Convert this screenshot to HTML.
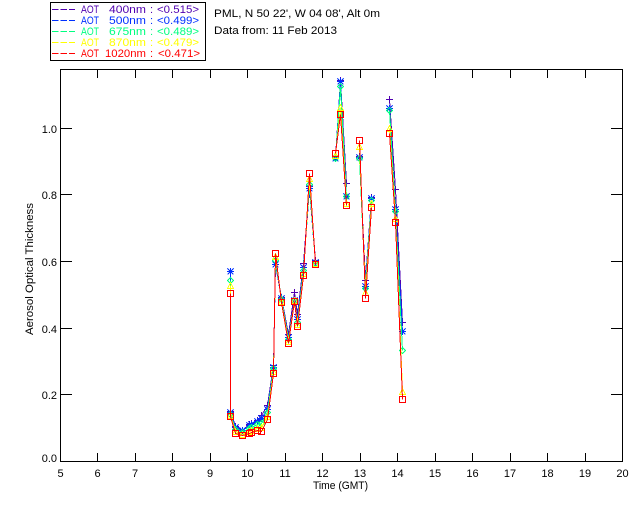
<!DOCTYPE html>
<html><head><meta charset="utf-8"><title>Aerosol Optical Thickness</title>
<style>
html,body{margin:0;padding:0;background:#fff;width:640px;height:512px;overflow:hidden}
svg{display:block}
text{font-family:"Liberation Sans",sans-serif;font-size:11px;fill:#000}
.c{text-anchor:middle}
.r{text-anchor:end}
.pu text{fill:#5000b0}
.bl text{fill:#0030ff}
.gr text{fill:#00ff80}
.ye text{fill:#ffff00}
.re text{fill:#ff0000}
</style></head><body>
<svg width="640" height="512" viewBox="0 0 640 512" xmlns="http://www.w3.org/2000/svg">
<defs>
<path id="p" d="M-3.5 0h7M0 -3.5v7"/>
<path id="b" d="M-3.5 0h7M0 -3.5v7M-3 -3l6 6M3 -3l-6 6"/>
<path id="g" d="M0 -3l3 3l-3 3l-3 -3z"/>
<path id="y" d="M0 -3l3 6h-6z"/>
<path id="s" d="M-3 -3h6v6h-6z"/>
</defs>

<!-- legend box -->
<rect x="50.5" y="2.5" width="155" height="58" fill="none" stroke="#000" shape-rendering="crispEdges"/>
<g stroke-dasharray="6.5 2" shape-rendering="crispEdges">
<path d="M52 9.5H75" stroke="#5000b0"/>
<path d="M52 20.5H75" stroke="#0030ff"/>
<path d="M52 31.5H75" stroke="#00ff80"/>
<path d="M52 42.5H75" stroke="#ffff00"/>
<path d="M52 53.5H75" stroke="#ff0000"/>
</g>
<g class="pu"><text x="81" y="13" textLength="18" lengthAdjust="spacingAndGlyphs">AOT</text><text x="109" y="13" textLength="37" lengthAdjust="spacingAndGlyphs">400nm</text><text x="150" y="13">:</text><text x="157" y="13" textLength="42" lengthAdjust="spacingAndGlyphs">&lt;0.515&gt;</text></g>
<g class="bl"><text x="81" y="24" textLength="18" lengthAdjust="spacingAndGlyphs">AOT</text><text x="109" y="24" textLength="37" lengthAdjust="spacingAndGlyphs">500nm</text><text x="150" y="24">:</text><text x="157" y="24" textLength="42" lengthAdjust="spacingAndGlyphs">&lt;0.499&gt;</text></g>
<g class="gr"><text x="81" y="35" textLength="18" lengthAdjust="spacingAndGlyphs">AOT</text><text x="109" y="35" textLength="37" lengthAdjust="spacingAndGlyphs">675nm</text><text x="150" y="35">:</text><text x="157" y="35" textLength="42" lengthAdjust="spacingAndGlyphs">&lt;0.489&gt;</text></g>
<g class="ye"><text x="81" y="46" textLength="18" lengthAdjust="spacingAndGlyphs">AOT</text><text x="109" y="46" textLength="37" lengthAdjust="spacingAndGlyphs">870nm</text><text x="150" y="46">:</text><text x="157" y="46" textLength="42" lengthAdjust="spacingAndGlyphs">&lt;0.479&gt;</text></g>
<g class="re"><text x="81" y="57" textLength="18" lengthAdjust="spacingAndGlyphs">AOT</text><text x="105" y="57" textLength="41" lengthAdjust="spacingAndGlyphs">1020nm</text><text x="150" y="57">:</text><text x="158" y="57" textLength="42" lengthAdjust="spacingAndGlyphs">&lt;0.471&gt;</text></g>

<text x="214" y="17" textLength="166" lengthAdjust="spacingAndGlyphs">PML, N 50 22', W 04 08', Alt 0m</text>
<text x="214" y="34" textLength="123" lengthAdjust="spacingAndGlyphs">Data from: 11 Feb 2013</text>

<!-- axes -->
<g fill="none" stroke="#000" shape-rendering="crispEdges">
<rect x="60.5" y="69.5" width="562" height="392"/>
<path d="M97.5 461V453M135.5 461V453M172.5 461V453M210.5 461V453M247.5 461V453M285.5 461V453M322.5 461V453M360.5 461V453M397.5 461V453M435.5 461V453M472.5 461V453M510.5 461V453M547.5 461V453M585.5 461V453"/>
<path d="M97.5 70V78M135.5 70V78M172.5 70V78M210.5 70V78M247.5 70V78M285.5 70V78M322.5 70V78M360.5 70V78M397.5 70V78M435.5 70V78M472.5 70V78M510.5 70V78M547.5 70V78M585.5 70V78"/>
<path d="M61 394.5H72M61 328.5H72M61 261.5H72M61 194.5H72M61 128.5H72"/>
<path d="M622 394.5H611M622 328.5H611M622 261.5H611M622 194.5H611M622 128.5H611"/>
</g>

<!-- tick labels -->
<g class="c">
<text x="60.5" y="477">5</text><text x="97.5" y="477">6</text><text x="135" y="477">7</text><text x="172.5" y="477">8</text><text x="210" y="477">9</text><text x="247.5" y="477">10</text><text x="285" y="477">11</text><text x="322.5" y="477">12</text><text x="360" y="477">13</text><text x="397.5" y="477">14</text><text x="435" y="477">15</text><text x="472.5" y="477">16</text><text x="510" y="477">17</text><text x="547.5" y="477">18</text><text x="585" y="477">19</text><text x="622.5" y="477">20</text>
</g>
<g class="r">
<text x="57" y="462">0.0</text><text x="57" y="399">0.2</text><text x="57" y="333">0.4</text><text x="57" y="266">0.6</text><text x="57" y="199">0.8</text><text x="57" y="133">1.0</text>
</g>
<text x="313" y="489" textLength="55" lengthAdjust="spacingAndGlyphs">Time (GMT)</text>
<text transform="translate(33 335) rotate(-90)" textLength="132" lengthAdjust="spacingAndGlyphs">Aerosol Optical Thickness</text>

<!-- data -->
<g transform="translate(-.5 .5)" fill="none" shape-rendering="crispEdges">
<g stroke="#5000b0">
<polyline points="231,271 231,411 236,426 243,430 250,424 252,423 258,420 262,415 268,405 274,365 276,264 282,297 289,334 295,292 298,314 304,263 310,186 316,260"/>
<polyline points="336,157 341,80 347,183"/>
<polyline points="360,156 366,280 372,197"/>
<polyline points="390,99 396,189 403,322"/>
<use href="#p" x="231" y="271"/><use href="#p" x="231" y="411"/><use href="#p" x="236" y="426"/><use href="#p" x="243" y="430"/><use href="#p" x="250" y="424"/><use href="#p" x="252" y="423"/><use href="#p" x="258" y="420"/><use href="#p" x="262" y="415"/><use href="#p" x="268" y="405"/><use href="#p" x="274" y="365"/><use href="#p" x="276" y="264"/><use href="#p" x="282" y="297"/><use href="#p" x="289" y="334"/><use href="#p" x="295" y="292"/><use href="#p" x="298" y="314"/><use href="#p" x="304" y="263"/><use href="#p" x="310" y="186"/><use href="#p" x="316" y="260"/><use href="#p" x="336" y="157"/><use href="#p" x="341" y="80"/><use href="#p" x="347" y="183"/><use href="#p" x="360" y="156"/><use href="#p" x="366" y="280"/><use href="#p" x="372" y="197"/><use href="#p" x="390" y="99"/><use href="#p" x="396" y="189"/><use href="#p" x="403" y="322"/>
</g>
<g stroke="#0030ff">
<polyline points="231,271 231,412 236,427 243,430 250,425 252,424 258,421 262,418 268,409 274,367 276,264 282,298 289,337 295,300 298,319 304,267 310,188 316,262"/>
<polyline points="336,158 341,81 347,196"/>
<polyline points="360,157 366,286 372,198"/>
<polyline points="390,108 396,209 403,331"/>
<use href="#b" x="231" y="271"/><use href="#b" x="231" y="412"/><use href="#b" x="236" y="427"/><use href="#b" x="243" y="430"/><use href="#b" x="250" y="425"/><use href="#b" x="252" y="424"/><use href="#b" x="258" y="421"/><use href="#b" x="262" y="418"/><use href="#b" x="268" y="409"/><use href="#b" x="274" y="367"/><use href="#b" x="276" y="264"/><use href="#b" x="282" y="298"/><use href="#b" x="289" y="337"/><use href="#b" x="295" y="300"/><use href="#b" x="298" y="319"/><use href="#b" x="304" y="267"/><use href="#b" x="310" y="188"/><use href="#b" x="316" y="262"/><use href="#b" x="336" y="158"/><use href="#b" x="341" y="81"/><use href="#b" x="347" y="196"/><use href="#b" x="360" y="157"/><use href="#b" x="366" y="286"/><use href="#b" x="372" y="198"/><use href="#b" x="390" y="108"/><use href="#b" x="396" y="209"/><use href="#b" x="403" y="331"/>
</g>
<g stroke="#00ff80">
<polyline points="231,280 231,414 236,429 243,432 250,428 252,427 258,424 262,423 268,412 274,368 276,260 282,299 289,339 295,300 298,322 304,270 310,184 316,263"/>
<polyline points="336,158 341,86 347,196"/>
<polyline points="360,158 366,288 372,200"/>
<polyline points="390,110 396,211 403,350"/>
<use href="#g" x="231" y="280"/><use href="#g" x="231" y="414"/><use href="#g" x="236" y="429"/><use href="#g" x="243" y="432"/><use href="#g" x="250" y="428"/><use href="#g" x="252" y="427"/><use href="#g" x="258" y="424"/><use href="#g" x="262" y="423"/><use href="#g" x="268" y="412"/><use href="#g" x="274" y="368"/><use href="#g" x="276" y="260"/><use href="#g" x="282" y="299"/><use href="#g" x="289" y="339"/><use href="#g" x="295" y="300"/><use href="#g" x="298" y="322"/><use href="#g" x="304" y="270"/><use href="#g" x="310" y="184"/><use href="#g" x="316" y="263"/><use href="#g" x="336" y="158"/><use href="#g" x="341" y="86"/><use href="#g" x="347" y="196"/><use href="#g" x="360" y="158"/><use href="#g" x="366" y="288"/><use href="#g" x="372" y="200"/><use href="#g" x="390" y="110"/><use href="#g" x="396" y="211"/><use href="#g" x="403" y="350"/>
</g>
<g stroke="#ffff00">
<polyline points="231,285 231,415 236,431 243,434 250,431 252,430 258,428 262,427 268,416 274,371 276,256 282,301 289,341 295,300 298,324 304,273 310,178 316,263"/>
<polyline points="336,155 341,107 347,203"/>
<polyline points="360,146 366,292 372,203"/>
<polyline points="390,128 396,218 403,391"/>
<use href="#y" x="231" y="285"/><use href="#y" x="231" y="415"/><use href="#y" x="236" y="431"/><use href="#y" x="243" y="434"/><use href="#y" x="250" y="431"/><use href="#y" x="252" y="430"/><use href="#y" x="258" y="428"/><use href="#y" x="262" y="427"/><use href="#y" x="268" y="416"/><use href="#y" x="274" y="371"/><use href="#y" x="276" y="256"/><use href="#y" x="282" y="301"/><use href="#y" x="289" y="341"/><use href="#y" x="295" y="300"/><use href="#y" x="298" y="324"/><use href="#y" x="304" y="273"/><use href="#y" x="310" y="178"/><use href="#y" x="316" y="263"/><use href="#y" x="336" y="155"/><use href="#y" x="341" y="107"/><use href="#y" x="347" y="203"/><use href="#y" x="360" y="146"/><use href="#y" x="366" y="292"/><use href="#y" x="372" y="203"/><use href="#y" x="390" y="128"/><use href="#y" x="396" y="218"/><use href="#y" x="403" y="391"/>
</g>
<g stroke="#ff0000">
<polyline points="231,293 231,416 236,433 243,435 250,433 252,432 258,430 262,431 268,419 274,373 276,253 282,302 289,343 295,301 298,326 304,275 310,173 316,264"/>
<polyline points="336,153 341,114 347,205"/>
<polyline points="360,140 366,298 372,207"/>
<polyline points="390,133 396,222 403,399"/>
<use href="#s" x="231" y="293"/><use href="#s" x="231" y="416"/><use href="#s" x="236" y="433"/><use href="#s" x="243" y="435"/><use href="#s" x="250" y="433"/><use href="#s" x="252" y="432"/><use href="#s" x="258" y="430"/><use href="#s" x="262" y="431"/><use href="#s" x="268" y="419"/><use href="#s" x="274" y="373"/><use href="#s" x="276" y="253"/><use href="#s" x="282" y="302"/><use href="#s" x="289" y="343"/><use href="#s" x="295" y="301"/><use href="#s" x="298" y="326"/><use href="#s" x="304" y="275"/><use href="#s" x="310" y="173"/><use href="#s" x="316" y="264"/><use href="#s" x="336" y="153"/><use href="#s" x="341" y="114"/><use href="#s" x="347" y="205"/><use href="#s" x="360" y="140"/><use href="#s" x="366" y="298"/><use href="#s" x="372" y="207"/><use href="#s" x="390" y="133"/><use href="#s" x="396" y="222"/><use href="#s" x="403" y="399"/>
</g>
</g>
</svg>
</body></html>
